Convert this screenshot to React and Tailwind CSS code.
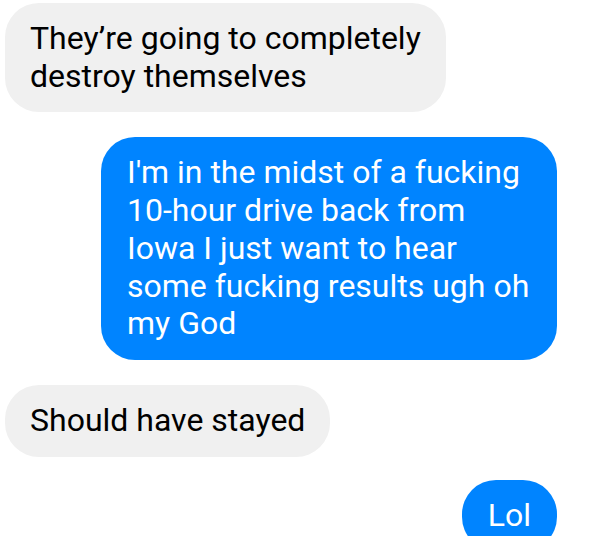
import React from "react";

const messages = [
  { from: "them", text: "They\u2019re going to completely destroy themselves" },
  {
    from: "me",
    text: "I'm in the midst of a fucking 10-hour drive back from Iowa I just want to hear some fucking results ugh oh my God",
  },
  { from: "them", text: "Should have stayed" },
  { from: "me", text: "Lol" },
];

const Bubble = ({ from, text, last }) => {
  const mine = from === "me";
  return (
    <div
      className={
        (mine ? "flex justify-end" : "flex justify-start") +
        (last ? " mt-[23px]" : " mt-[25px] first:mt-0")
      }
    >
      <div
        className={
          mine
            ? "max-w-[456px] rounded-[34px] bg-[#0084ff] px-[26px] py-[17px] text-white"
            : "max-w-[441px] rounded-[34px] bg-[#f0f0f0] px-[25px] py-[17px] text-black"
        }
      >
        {text}
      </div>
    </div>
  );
};

export default function App() {
  return (
    <div
      className="h-[536px] w-[605px] overflow-hidden bg-white pl-[5px] pr-[48px] pt-[3px] text-[32px] leading-[37.7px]"
      style={{ fontFamily: "Roboto, 'Noto Sans', sans-serif" }}
    >
      <div className="flex flex-col">
        {messages.map((m, i) => (
          <Bubble key={i} {...m} last={i === messages.length - 1} />
        ))}
      </div>
    </div>
  );
}
